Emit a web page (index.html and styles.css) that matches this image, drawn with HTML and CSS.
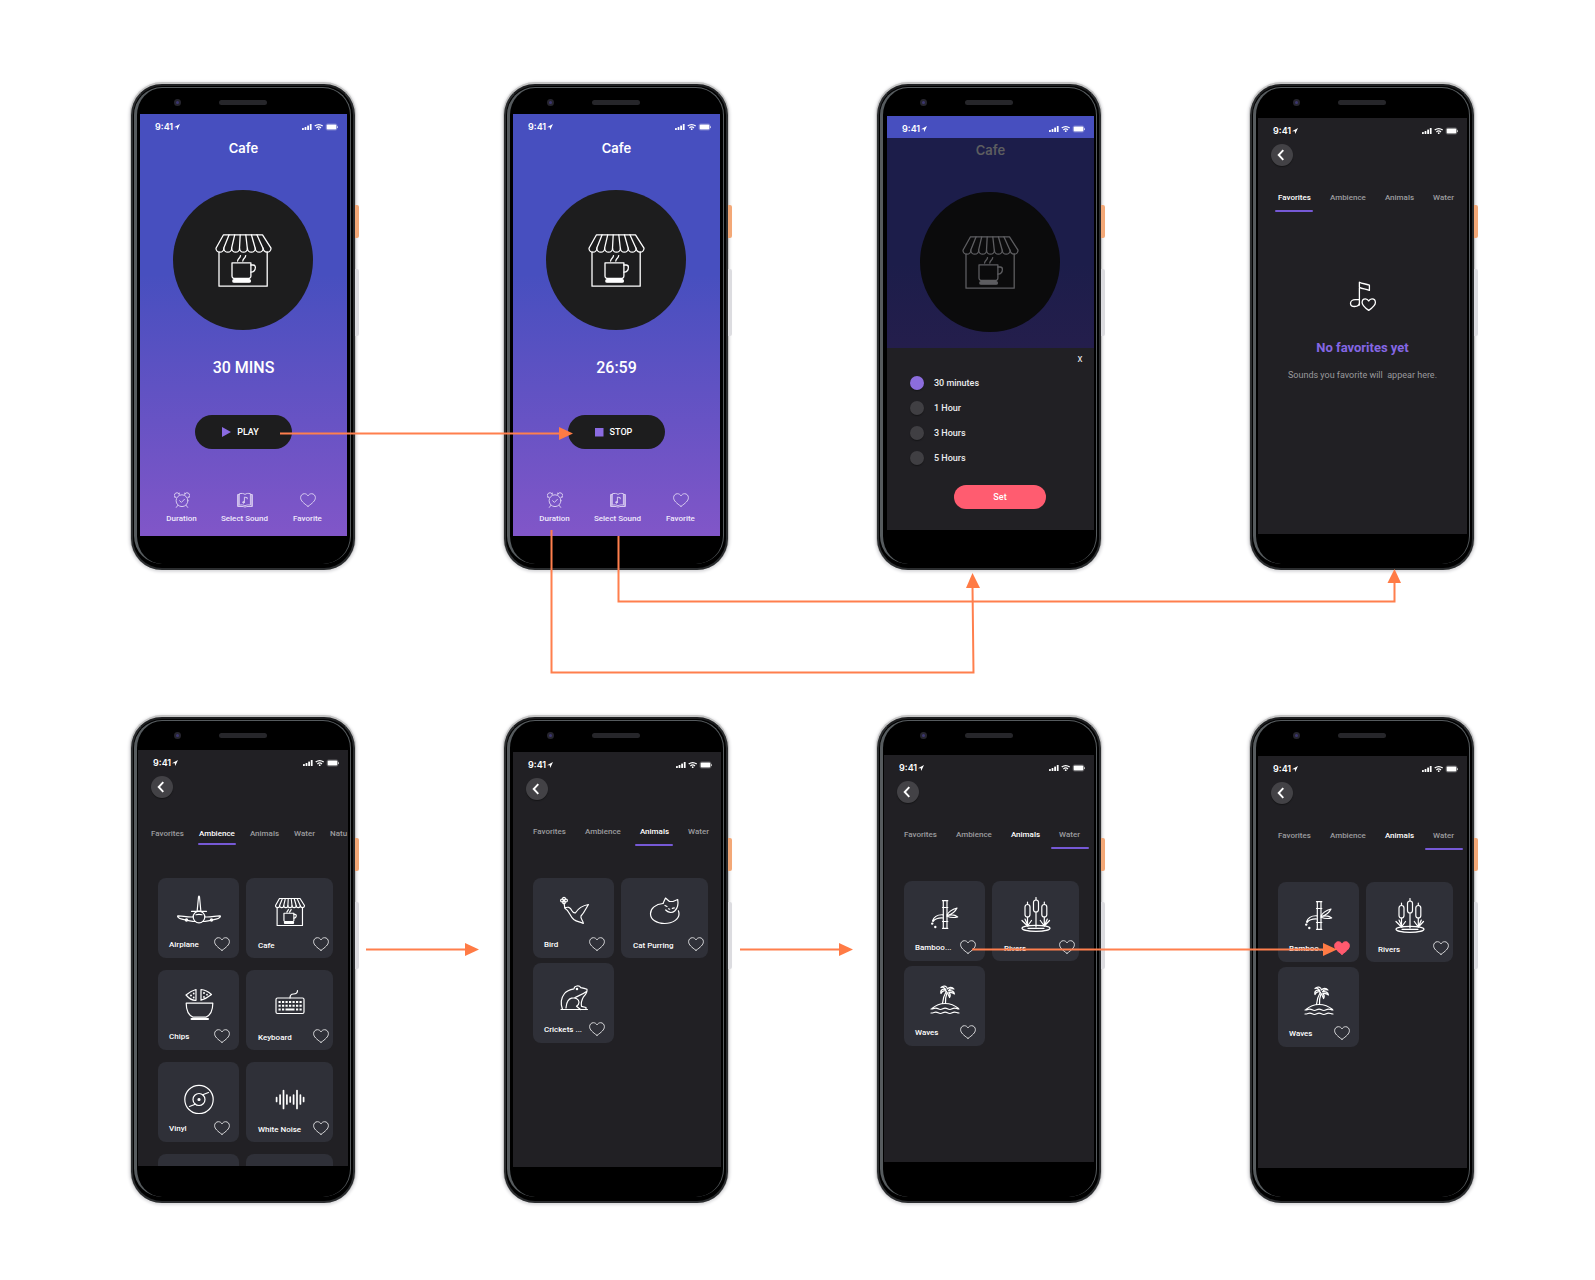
FILE: index.html
```html
<!DOCTYPE html>
<html lang="en">
<head>
<meta charset="utf-8">
<title>Sleep sounds – screen flow</title>
<meta name="viewport" content="width=device-width, initial-scale=1">
<link rel="stylesheet" href="styles.css">
</head>
<body>

<svg class="sprite" aria-hidden="true">
  <symbol id="i-locate" viewBox="0 0 6 6"><path d="M0 3.2 6 0 3.2 6 2.8 3.3Z" fill="currentColor"/></symbol>
  <symbol id="i-signals" viewBox="0 0 36 8">
    <g fill="currentColor">
      <rect x="0" y="5" width="1.8" height="2" rx=".5"/><rect x="2.6" y="4" width="1.8" height="3" rx=".5"/>
      <rect x="5.2" y="2.6" width="1.8" height="4.4" rx=".5"/><rect x="7.8" y="1" width="1.8" height="6" rx=".5"/>
      <rect x="24.6" y="1.4" width="9.8" height="5.200" rx="1"/><rect x="35.2" y="3.2" width=".8" height="1.8" rx=".4"/>
      <circle cx="16.7" cy="6.2" r=".9"/>
    </g>
    <rect x="24" y=".8" width="11" height="6.4" rx="1.6" fill="none" stroke="currentColor" stroke-width=".4" opacity=".5"/>
    <g fill="none" stroke="currentColor" stroke-width="1.3"><path d="M12.7 3.1Q16.7 0 20.700 3.1"/><path d="M14.4 4.9Q16.7 3 19 4.9"/></g>
  </symbol>
  <symbol id="i-back" viewBox="0 0 8 12"><path d="M6.3 1.2 1.7 6l4.6 4.8" fill="none" stroke="currentColor" stroke-width="1.9"/></symbol>
  <symbol id="i-heart" viewBox="0 0 16 14"><path d="M8 13.4C3.6 10.2 .6 7.7 .6 4.7 .6 2.4 2.3 .7 4.4 .7 5.9 .7 7.2 1.5 8 2.9 8.8 1.5 10.1 .7 11.6 .7 13.7 .7 15.4 2.4 15.4 4.7 15.4 7.7 12.4 10.2 8 13.4Z"/></symbol>
  <symbol id="i-cafe" viewBox="0 0 57 53">
    <path d="M8.5 .8H47.5L56 14.2a3.93 4 0 0 1-7.86 0a3.93 4 0 0 1-7.86 0a3.93 4 0 0 1-7.86 0a3.93 4 0 0 1-7.86 0a3.93 4 0 0 1-7.86 0a3.93 4 0 0 1-7.86 0a3.93 4 0 0 1-7.86 0Z"/>
    <path d="M14.1 .8 8.7 14.2M19.7 .8 16.6 14.2M25.2 .8 24.5 14.2M30.8 .8 32.3 14.2M36.4 .8 40.2 14.2M41.9 .8 48 14.2"/>
    <path d="M4 18V52.2H52.2V18"/>
    <path d="M17 28.8H35.9V42a2.5 2.5 0 0 1-2.5 2.5H19.5A2.5 2.5 0 0 1 17 42Z"/>
    <path d="M35.9 31h2.3a2.2 2.2 0 0 1 2.2 2.2c0 3-1.5 4.8-4.5 4.9"/>
    <path d="M22.6 27c.2-2.6 2.3-2.2 2.900-5.4M27.8 27c.2-2.6 2.3-2.2 2.900-5.4"/>
    <rect x="17.8" y="45.6" width="17.6" height="2.6" rx="1.3" fill="currentColor"/>
  </symbol>
  <symbol id="i-alarm" viewBox="0 0 16 16">
    <circle cx="8" cy="8.7" r="5.9"/><path d="M5.6 8.7l1.8 1.7 3-3.1M3.8 13.4 2.3 15.4M12.2 13.4l1.5 2M1 5.2A2.5 2.5 0 0 1 4.9 1.6M15 5.2a2.5 2.5 0 0 0-3.9-3.6M.6 5l1.4.3M15.4 5l-1.4.3M5.2 1v1.5M10.8 1v1.5"/>
  </symbol>
  <symbol id="i-songbook" viewBox="0 0 16 15">
    <path d="M2.6 1.2c2.2-.6 4-.3 5.4.7 1.4-1 3.2-1.3 5.4-.7v11.4c-2.2-.5-4-.2-5.4.8-1.4-1-3.2-1.3-5.4-.8ZM2.6 2H.6v12h5.6c.7.7 2.9.7 3.6 0h5.6V2h-2"/>
    <path d="M1.6 2.4v10.8M14.4 2.4v10.8" opacity=".8"/>
    <path d="M7.400 9.800V4.600l2.800.5v1.200"/><circle cx="6.6" cy="9.8" r=".9" fill="currentColor"/>
  </symbol>
  <symbol id="i-note" viewBox="0 0 28 32">
    <path d="M10.4 25V2.2c3 1.8 5.8 1.2 10 3v5.2c-4.2-1.8-7-1.2-10-3M10.4 19.6H6.2c-2.6 0-4.7 1.6-4.7 3.6 0 1.900 1.5 3.3 4 3.3 2.900 0 4.900-1.5 4.900-4"/>
    <path d="M19.7 30.4c-3.8-2.7-6.6-5-6.6-7.900 0-2.1 1.5-3.7 3.3-3.7 1.5 0 2.6.8 3.3 2.2.7-1.4 1.8-2.2 3.3-2.2 1.900 0 3.4 1.6 3.4 3.7 0 2.900-2.8 5.2-6.7 7.900Z"/>
  </symbol>
  <symbol id="i-plane" viewBox="0 0 44 36">
    <path d="M20.2 16.500 21.500 3Q22 1.200 22.500 3L23.800 16.500M14.500 17.300h15"/>
    <circle cx="22" cy="23" r="5.8"/><path d="M19 20.8q3-1 6 0M16.3 22.9C11 23.4 5 21.8 1 21.9c-1.2.3.3 2.4 4 3.3 4 1 10 2.4 13.3 2.3M27.7 22.9c5.3.5 11.3-1.1 15.3-1 1.2.3-.3 2.4-4 3.3-4 1-10 2.4-13.3 2.3"/>
    <g fill="currentColor"><circle cx="9.5" cy="26" r="1.1"/><circle cx="34.5" cy="26" r="1.1"/></g>
  </symbol>
  <symbol id="i-chips" viewBox="0 0 44 36">
    <path d="M9.2 17.2H35.8c0 6.5-2 11.800-7 14H16.2c-5-2.2-7-7.500-7-14Z"/><path d="M14.5 33H31" stroke-width="2"/>
    <path d="M19 3.5V14.3Q14 14.8 9 9Q13.5 5 19 3.5ZM24 3.5V14.300Q29.5 12.5 34.5 8.5Q29.5 4 24 3.5Z"/>
    <g fill="currentColor" stroke="none"><circle cx="14" cy="9.5" r="1"/><circle cx="16.7" cy="7.5" r=".9"/><circle cx="16.7" cy="11.5" r=".9"/><circle cx="27" cy="7" r="1"/><circle cx="27" cy="11" r=".9"/><circle cx="30" cy="8.7" r=".9"/></g>
  </symbol>
  <symbol id="i-keyboard" viewBox="0 0 44 36">
    <rect x="8" y="12" width="28" height="15.500" rx="1.5"/><path d="M22 12c0-3.500 1.5-4 3.500-4s4-.5 4-3.500"/>
    <g stroke-width="2" stroke-linecap="butt"><path d="M10.500 16H34M10.500 19.700H34" stroke-dasharray="2.200 1.300"/><path d="M10.500 23.500h2.200M14 23.500h2.200M17.500 23.500h9M28 23.500h2.200M31.500 23.500h2.200"/></g>
  </symbol>
  <symbol id="i-vinyl" viewBox="0 0 44 36">
    <circle cx="22" cy="21.5" r="14.2"/><circle cx="22" cy="21.5" r="6"/><circle cx="22" cy="21.5" r="1" fill="currentColor"/>
    <path d="M25.7 16.8 31.5 14.5M18.3 26.2 12.5 28.5"/>
  </symbol>
  <symbol id="i-noise" viewBox="0 0 44 36">
    <path d="M8.6 19.5v4M12.1 17v9M15.5 12.5v18M18.9 17v9M22.2 19v5M25.6 17v9M29 12.5v18M32.4 17v9M35.6 19.5v4" stroke-width="1.7"/>
  </symbol>
  <symbol id="i-bird" viewBox="0 0 44 36">
    <path d="M12 8.500l.8 5.700M12.8 14.2c2.5-1.7 5.5-1.2 7 2.3 1 2 2.2 2.6 3.7 2.3C27 13 31 11.5 36.5 10.5c-2.5 3.5-4 8-7.5 11.5-1 2.5 2.5 4.8 2.3 7.5-3.5-2-6-1.3-9.5-4C17.5 22 17.5 16.5 12.8 14.2Z"/>
    <g><circle cx="12" cy="4.7" r="1.4"/><circle cx="10" cy="6.6" r="1.4"/><circle cx="14" cy="6.6" r="1.4"/><circle cx="12" cy="8.4" r="1.3"/></g>
  </symbol>
  <symbol id="i-cat" viewBox="0 0 44 36">
    <path d="M20 9.5C12.5 10 7.5 14.5 7.5 19.7 7.5 25.5 13.5 29.5 21.5 29.5c8.500 0 14.500-4.500 14.500-9.500 0-1.200-.2-2.200-.6-3.200"/>
    <path d="M20 9.5 22.5 4 26.5 7.5H30L34.7 5.5c.7 4 .3 8.5-3 11.5-2.5 2.200-6.500 2-9-1"/>
    <path d="M22 11.500l2 1M29.300 14.300l2-.4M25.500 14.800l1.200.4"/>
  </symbol>
  <symbol id="i-frog" viewBox="0 0 44 36">
    <path d="M9 30.500H35.500M10.500 30.500C8.500 25 9 19 12.500 14.500c2-2.600 5-3.800 9.500-4.700.3-3 5-4 6.800-1.200 2.200.3 4.300.8 6.200 1.700.5 2.700-1.200 5-3.500 7.500-1.700 3-2.700 6-2 9.500l4.500 1.200v2M34.500 12.500C30.500 15.500 27 16.500 23 18.500M14 29c.5-3.500.5-8.500 5.500-9.800 4-.8 7.500.8 7.500 4 0 1.800-1 3-2.500 4l4 3.300"/>
    <circle cx="25" cy="10" r=".7" fill="currentColor"/>
  </symbol>
  <symbol id="i-bamboo" viewBox="0 0 44 36">
    <path d="M20.300 3.500v28M24 3.500v28M19.500 3.700h5.300M19.500 10.500h5.300M19.500 24.500h5.300M19.500 31.300h5.300"/>
    <path d="M9.500 24c1.500-4.500 5-6.500 10.500-6.200M10 24.500c2.500-3 5.500-3.800 10-3.500"/>
    <path d="M24 18C26 14 29 12.500 34 11c-1.800 3.700-5 6.200-9.500 7.500 4-1 7.500-.8 10.200 1.400-4 1.100-7.500.6-10.700-.7"/>
    <g fill="currentColor" stroke="none"><circle cx="9.200" cy="26.600" r="1.200"/><circle cx="12.300" cy="30" r="1.200"/></g>
  </symbol>
  <symbol id="i-reeds" viewBox="0 0 44 36">
    <rect x="19.500" y="3" width="5" height="12" rx="2.500"/><rect x="11" y="7.500" width="5" height="12.500" rx="2.500"/><rect x="27.800" y="7.500" width="5" height="12.500" rx="2.500"/>
    <path d="M22 .5V3M22 15v15M13.500 5v2.500M13.500 20v8M30.300 5v2.500M30.300 20v8M13.500 29 8 23.500M13.500 29 17.500 23.500M14 29l-3-7M30.300 29 35.500 23.500M30.300 29 26.300 23.500M30.300 29l3-7"/>
    <ellipse cx="22" cy="31.300" rx="14" ry="3"/><path d="M14 31.300h16"/>
  </symbol>
  <symbol id="i-palm" viewBox="0 0 44 36">
    <path d="M9 26.500c4-3.500 8-5 13-5s9.500 1.500 13.500 5M8 27c2.500 0 3.200-.9 4.700-.9 2.500 0 2.500 1.400 4.700 1.400s2.500-1.400 4.700-1.400 2.500 1.400 4.700 1.400 2.500-1.400 4.700-1.400c1.800 0 2.500.9 4.500.9M8 31c2.500 0 3.200-.9 4.700-.9 2.500 0 2.500 1.400 4.700 1.400s2.500-1.400 4.700-1.400 2.500 1.400 4.700 1.400 2.500-1.400 4.700-1.400c1.800 0 2.500.9 4.500.9"/>
    <path d="M19.500 21.500c.3-4 1-7.500 3.500-11.500M22.500 21.500c-.2-3.500.3-7.500 1.500-10.500"/>
    <path d="M23.500 9.500C22 8 19.500 8.500 18 11.500 17 8 20 6 23 8c-1-2.500-3.500-3.500-5-2.500 2.500-2.500 6-1.500 6.500 1.500 1.500-2 4.500-2.500 6.500 0-2.500-.8-4.500 0-5.500 1.800 3-.7 5.500.5 6 3.200-1.800-1.500-3.700-2-5.700-1.500 1.500 1.500 1.700 3.500.8 5-.8-2-1.700-4-3.100-6Z"/>
  </symbol>
</svg>

<main class="board">

  <section class="phone phone--player" aria-label="Player, ready">
    <div class="bezel"><i class="camera"></i><i class="speaker"></i></div>
    <div class="screen">
      <div class="status"><span>9:41</span><svg class="locate"><use href="#i-locate"/></svg><svg class="signals"><use href="#i-signals"/></svg></div>
      <h2 class="title">Cafe</h2>
      <div class="disc"><svg class="disc-art line"><use href="#i-cafe"/></svg></div>
      <p class="time">30 MINS</p>
      <button class="toggle" type="button"><svg class="toggle-icon" viewBox="0 0 9 10"><path d="M0 0 9 5 0 10Z"/></svg>PLAY</button>
      <nav class="actions">
        <a href="#duration"><svg class="line"><use href="#i-alarm"/></svg>Duration</a>
        <a href="#sounds"><svg class="line"><use href="#i-songbook"/></svg>Select Sound</a>
        <a href="#favorite"><svg class="line"><use href="#i-heart"/></svg>Favorite</a>
      </nav>
    </div>
    <i class="key key--power"></i><i class="key key--volume"></i>
  </section>

  <section class="phone phone--player" aria-label="Player, running">
    <div class="bezel"><i class="camera"></i><i class="speaker"></i></div>
    <div class="screen">
      <div class="status"><span>9:41</span><svg class="locate"><use href="#i-locate"/></svg><svg class="signals"><use href="#i-signals"/></svg></div>
      <h2 class="title">Cafe</h2>
      <div class="disc"><svg class="disc-art line"><use href="#i-cafe"/></svg></div>
      <p class="time">26:59</p>
      <button class="toggle" type="button"><svg class="toggle-icon" viewBox="0 0 9 10"><path d="M0 1H8.500V9.500H0Z"/></svg>STOP</button>
      <nav class="actions">
        <a href="#duration"><svg class="line"><use href="#i-alarm"/></svg>Duration</a>
        <a href="#sounds"><svg class="line"><use href="#i-songbook"/></svg>Select Sound</a>
        <a href="#favorite"><svg class="line"><use href="#i-heart"/></svg>Favorite</a>
      </nav>
    </div>
    <i class="key key--power"></i><i class="key key--volume"></i>
  </section>

  <section class="phone phone--duration" id="duration" aria-label="Duration">
    <div class="bezel"><i class="camera"></i><i class="speaker"></i></div>
    <div class="screen">
      <div class="status"><span>9:41</span><svg class="locate"><use href="#i-locate"/></svg><svg class="signals"><use href="#i-signals"/></svg></div>
      <div class="dimmed">
        <h2 class="title">Cafe</h2>
        <div class="disc"><svg class="disc-art line"><use href="#i-cafe"/></svg></div>
      </div>
      <form class="sheet">
        <button class="close" type="button" aria-label="Close">x</button>
        <label class="option"><input type="radio" name="duration" checked>30 minutes</label>
        <label class="option"><input type="radio" name="duration">1 Hour</label>
        <label class="option"><input type="radio" name="duration">3 Hours</label>
        <label class="option"><input type="radio" name="duration">5 Hours</label>
        <button class="set" type="button">Set</button>
      </form>
    </div>
    <i class="key key--power"></i><i class="key key--volume"></i>
  </section>

  <section class="phone phone--favorites" id="sounds" aria-label="Favorites">
    <div class="bezel"><i class="camera"></i><i class="speaker"></i></div>
    <div class="screen">
      <div class="status"><span>9:41</span><svg class="locate"><use href="#i-locate"/></svg><svg class="signals"><use href="#i-signals"/></svg></div>
      <button class="back" type="button" aria-label="Back"><svg><use href="#i-back"/></svg></button>
      <nav class="tabs"><a class="bright marked" href="#sounds">Favorites</a><a href="#ambience">Ambience</a><a href="#animals">Animals</a><a href="#water">Water</a></nav>
      <div class="empty">
        <svg class="line"><use href="#i-note"/></svg>
        <h2>No favorites yet</h2>
        <p>Sounds you favorite will  appear here.</p>
      </div>
    </div>
    <i class="key key--power"></i><i class="key key--volume"></i>
  </section>

  <section class="phone phone--ambience" id="ambience" aria-label="Ambience">
    <div class="bezel"><i class="camera"></i><i class="speaker"></i></div>
    <div class="screen">
      <div class="status"><span>9:41</span><svg class="locate"><use href="#i-locate"/></svg><svg class="signals"><use href="#i-signals"/></svg></div>
      <button class="back" type="button" aria-label="Back"><svg><use href="#i-back"/></svg></button>
      <nav class="tabs"><a href="#sounds">Favorites</a><a class="bright marked" href="#ambience">Ambience</a><a href="#animals">Animals</a><a href="#water">Water</a><a href="#nature">Natu</a></nav>
      <div class="cards">
        <article class="card"><svg class="art line"><use href="#i-plane"/></svg><footer><h3>Airplane</h3><button class="heart" type="button" aria-label="Favorite"><svg class="line"><use href="#i-heart"/></svg></button></footer></article>
        <article class="card"><svg class="art art--cafe line"><use href="#i-cafe"/></svg><footer><h3>Cafe</h3><button class="heart" type="button" aria-label="Favorite"><svg class="line"><use href="#i-heart"/></svg></button></footer></article>
        <article class="card"><svg class="art line"><use href="#i-chips"/></svg><footer><h3>Chips</h3><button class="heart" type="button" aria-label="Favorite"><svg class="line"><use href="#i-heart"/></svg></button></footer></article>
        <article class="card"><svg class="art line"><use href="#i-keyboard"/></svg><footer><h3>Keyboard</h3><button class="heart" type="button" aria-label="Favorite"><svg class="line"><use href="#i-heart"/></svg></button></footer></article>
        <article class="card"><svg class="art line"><use href="#i-vinyl"/></svg><footer><h3>Vinyl</h3><button class="heart" type="button" aria-label="Favorite"><svg class="line"><use href="#i-heart"/></svg></button></footer></article>
        <article class="card"><svg class="art line"><use href="#i-noise"/></svg><footer><h3>White Noise</h3><button class="heart" type="button" aria-label="Favorite"><svg class="line"><use href="#i-heart"/></svg></button></footer></article>
        <article class="card"></article>
        <article class="card"></article>
      </div>
    </div>
    <i class="key key--power"></i><i class="key key--volume"></i>
  </section>

  <section class="phone phone--animals" id="animals" aria-label="Animals">
    <div class="bezel"><i class="camera"></i><i class="speaker"></i></div>
    <div class="screen">
      <div class="status"><span>9:41</span><svg class="locate"><use href="#i-locate"/></svg><svg class="signals"><use href="#i-signals"/></svg></div>
      <button class="back" type="button" aria-label="Back"><svg><use href="#i-back"/></svg></button>
      <nav class="tabs"><a href="#sounds">Favorites</a><a href="#ambience">Ambience</a><a class="bright marked" href="#animals">Animals</a><a href="#water">Water</a></nav>
      <div class="cards">
        <article class="card"><svg class="art line"><use href="#i-bird"/></svg><footer><h3>Bird</h3><button class="heart" type="button" aria-label="Favorite"><svg class="line"><use href="#i-heart"/></svg></button></footer></article>
        <article class="card"><svg class="art line"><use href="#i-cat"/></svg><footer><h3>Cat Purring</h3><button class="heart" type="button" aria-label="Favorite"><svg class="line"><use href="#i-heart"/></svg></button></footer></article>
        <article class="card"><svg class="art line"><use href="#i-frog"/></svg><footer><h3>Crickets ...</h3><button class="heart" type="button" aria-label="Favorite"><svg class="line"><use href="#i-heart"/></svg></button></footer></article>
      </div>
    </div>
    <i class="key key--power"></i><i class="key key--volume"></i>
  </section>

  <section class="phone phone--water" id="water" aria-label="Water">
    <div class="bezel"><i class="camera"></i><i class="speaker"></i></div>
    <div class="screen">
      <div class="status"><span>9:41</span><svg class="locate"><use href="#i-locate"/></svg><svg class="signals"><use href="#i-signals"/></svg></div>
      <button class="back" type="button" aria-label="Back"><svg><use href="#i-back"/></svg></button>
      <nav class="tabs"><a href="#sounds">Favorites</a><a href="#ambience">Ambience</a><a class="bright" href="#animals">Animals</a><a class="marked" href="#water">Water</a></nav>
      <div class="cards">
        <article class="card"><svg class="art line"><use href="#i-bamboo"/></svg><footer><h3>Bamboo...</h3><button class="heart" type="button" aria-label="Favorite"><svg class="line"><use href="#i-heart"/></svg></button></footer></article>
        <article class="card"><svg class="art line"><use href="#i-reeds"/></svg><footer><h3>Rivers</h3><button class="heart" type="button" aria-label="Favorite"><svg class="line"><use href="#i-heart"/></svg></button></footer></article>
        <article class="card"><svg class="art line"><use href="#i-palm"/></svg><footer><h3>Waves</h3><button class="heart" type="button" aria-label="Favorite"><svg class="line"><use href="#i-heart"/></svg></button></footer></article>
      </div>
    </div>
    <i class="key key--power"></i><i class="key key--volume"></i>
  </section>

  <section class="phone phone--liked" aria-label="Water, one favorite">
    <div class="bezel"><i class="camera"></i><i class="speaker"></i></div>
    <div class="screen">
      <div class="status"><span>9:41</span><svg class="locate"><use href="#i-locate"/></svg><svg class="signals"><use href="#i-signals"/></svg></div>
      <button class="back" type="button" aria-label="Back"><svg><use href="#i-back"/></svg></button>
      <nav class="tabs"><a href="#sounds">Favorites</a><a href="#ambience">Ambience</a><a class="bright" href="#animals">Animals</a><a class="marked" href="#water">Water</a></nav>
      <div class="cards">
        <article class="card"><svg class="art line"><use href="#i-bamboo"/></svg><footer><h3>Bamboo...</h3><button class="heart heart--on" type="button" aria-label="Favorite"><svg class="line"><use href="#i-heart"/></svg></button></footer></article>
        <article class="card"><svg class="art line"><use href="#i-reeds"/></svg><footer><h3>Rivers</h3><button class="heart" type="button" aria-label="Favorite"><svg class="line"><use href="#i-heart"/></svg></button></footer></article>
        <article class="card"><svg class="art line"><use href="#i-palm"/></svg><footer><h3>Waves</h3><button class="heart" type="button" aria-label="Favorite"><svg class="line"><use href="#i-heart"/></svg></button></footer></article>
      </div>
    </div>
    <i class="key key--power"></i><i class="key key--volume"></i>
  </section>

  <!-- Arrows between the screens -->
  <svg class="flow" viewBox="0 0 1595 1280" preserveAspectRatio="xMidYMin meet" aria-hidden="true">
    <g class="flow-line">
      <path d="M280 433.500H562"/>
      <path d="M551.500 530V672.500H973.500L972.500 586"/>
      <path d="M618.500 536V601.500H1394.500V580"/>
      <path d="M366 949.500H467M740 949.500H841M972 949.500H1326"/>
    </g>
    <g class="flow-head">
      <path d="M559 427 573 433.500 559 440Z"/>
      <path d="M966 588 972.500 573 980 588Z"/>
      <path d="M1387.500 583 1394.500 569 1401 583Z"/>
      <path d="M465 943 479 949.500 465 956Z"/><path d="M839 943 853 949.500 839 956Z"/><path d="M1323 943 1337 949.500 1323 956Z"/>
    </g>
  </svg>
</main>
</body>
</html>
```
FILE: styles.css
```css
* { box-sizing: border-box; }

body {
  margin: 0;
  background: #fff;
  color: #fff;
  font-family: Roboto, "Liberation Sans", sans-serif;
  font-size: 8px;
  font-weight: 500;
}

h2, h3, p { margin: 0; font-weight: 500; }
a { color: inherit; text-decoration: none; }
button { border: 0; padding: 0; margin: 0; background: none; color: inherit; font: inherit; cursor: pointer; }
i { display: block; }
.sprite { display: none; }
.line { fill: none; stroke: currentColor; stroke-linecap: round; stroke-linejoin: round; }

/* Board */
.board {
  position: relative;
  display: grid;
  grid-template-columns: repeat(4, 224px);
  justify-content: space-between;
  row-gap: 147px;
  padding: 84px 121px 77px 131px;
}

.flow { position: absolute; top: 0; left: 0; width: 100%; pointer-events: none; }
.flow-line { fill: none; stroke: #ff7f4d; stroke-width: 2; }
.flow-head { fill: #ff7b45; }

/* Phone */
.phone {
  --bezel: 30px;
  --height: 422px;
  --left: 9px;
  --width: 207px;
  position: relative;
  height: 486px;
  border: 2px solid #2b2d2f;
  border-top-color: #1d1e20;
  border-radius: 31px;
  background: #000;
  box-shadow: 0 -1px 0 1px #c4c4c4, 0 0 3px 2px #d9d9dc;
}
.phone::before {
  content: "";
  position: absolute;
  inset: 1px 2px 4px 1px;
  border: solid #565b5e;
  border-width: 1px 1px 0 3px;
  border-radius: 28px;
}
.phone--duration { --bezel: 32px; --height: 414px; --left: 10px; }
.phone--favorites { --bezel: 34px; --height: 416px; --left: 8px; --width: 209px; }
.phone--ambience { --bezel: 33px; --height: 416px; --left: 7px; --width: 210px; }
.phone--animals { --bezel: 35px; --height: 415px; --width: 208px; }
.phone--water { --bezel: 38px; --height: 407px; --left: 7px; --width: 210px; }
.phone--liked { --bezel: 39px; --height: 412px; --left: 8px; --width: 209px; }

.bezel {
  display: flex;
  align-items: flex-start;
  height: calc(var(--bezel) - 2px);
  padding: 13px 0 0 41px;
}
.camera { width: 7px; height: 7px; border: 2px solid #26252e; border-radius: 50%; background: #3b3670; }
.speaker { width: 48px; height: 5px; margin: 1px 0 0 38px; border-radius: 3px; background: #26262a; }

.key { position: absolute; left: 222px; width: 4px; border-radius: 0 2px 2px 0; }
.key--power { top: 119px; height: 33px; background: #f3a877; }
.key--volume { top: 183px; height: 67px; background: #dcdce0; }

/* Screen */
.screen {
  position: relative;
  width: var(--width);
  height: var(--height);
  margin-left: calc(var(--left) - 2px);
  overflow: hidden;
  background: #212024;
}
.phone--player .screen { background: linear-gradient(#474fbf 0%, #474fbf 38%, #8156c8 100%); }

.status {
  display: flex;
  align-items: center;
  height: 22px;
  padding: 3px 9px 0 15px;
  font-family: Inter, "Liberation Sans", sans-serif;
  font-size: 9px;
  font-weight: 600;
}
.locate { width: 6px; height: 6px; margin-left: 1px; }
.signals { width: 36px; height: 8px; margin-left: auto; }
.phone--duration .status { background: #474fbf; }

/* Player */
.title {
  margin-top: 4px;
  font-family: Inter, "Liberation Sans", sans-serif;
  font-size: 13px;
  font-weight: 600;
  line-height: 17px;
  text-align: center;
}
.disc {
  display: flex;
  align-items: center;
  justify-content: center;
  width: 140px;
  height: 140px;
  margin: 33px 0 0 33px;
  border-radius: 50%;
  background: #1d1d1e;
}
.disc-art { width: 57px; height: 53px; stroke-width: 1.300; }
.time { margin-top: 28px; font-size: 16px; line-height: 20px; text-align: center; }
.toggle {
  display: flex;
  align-items: center;
  justify-content: center;
  gap: 6px;
  width: 97px;
  height: 34px;
  margin: 37px auto 0;
  padding-right: 6px;
  border-radius: 17px;
  background: #1d1d1e;
  font-size: 9px;
}
.toggle-icon { width: 9px; height: 10px; fill: #8b6be2; }
.actions {
  display: grid;
  grid-template-columns: repeat(3, 63px);
  margin: 43px 0 0 10px;
  color: #f0e9fb;
}
.actions a { display: flex; flex-direction: column; align-items: center; gap: 6px; line-height: 10px; white-space: nowrap; }
.actions svg { width: 16px; height: 16px; opacity: .8; }

/* Duration sheet */
.dimmed { height: 210px; padding-top: 1px; background: linear-gradient(#1c1d4a 60%, #241e4c); color: #5d5d60; }
.dimmed .title { margin-top: 3px; }
.dimmed .disc { background: #0b0b0c; }
.sheet { display: flex; flex-direction: column; align-items: flex-start; padding: 5px 9px 0 23px; font-size: 9px; color: #ececee; }
.close { align-self: flex-end; width: 10px; line-height: 12px; font-size: 10px; font-weight: 400; margin-bottom: 5px; }
.option { display: flex; align-items: center; gap: 10px; height: 25px; }
.option input {
  appearance: none;
  width: 14px;
  height: 14px;
  margin: 0;
  border-radius: 50%;
  background: #403f43;
  box-shadow: 0 1px 1px #161618;
}
.option input:checked { background: #8c6ddd; }
.set { width: 92px; height: 24px; margin: 15px 0 0 44px; border-radius: 12px; background: #ff5c70; color: #fff; }

/* Sound browser */
.back {
  display: flex;
  align-items: center;
  justify-content: center;
  width: 22px;
  height: 22px;
  margin: 4px 0 0 13px;
  border-radius: 50%;
  background: #434246;
  box-shadow: 0 1px 1px #151517;
}
.back svg { width: 8px; height: 12px; margin-right: 2px; }
.tabs { display: flex; gap: 19px; margin-top: 26px; padding-left: 20px; line-height: 12px; color: #9c9c9f; }
.tabs a { position: relative; white-space: nowrap; }
.tabs .bright { color: #fff; }
.marked::after {
  content: "";
  position: absolute;
  top: 18px;
  left: 50%;
  width: 38px;
  height: 2px;
  margin-left: -19px;
  border-radius: 1px;
  background: #7659d6;
}
.phone--ambience .tabs { gap: 15px; margin-top: 30px; padding-left: 13px; }
.phone--ambience .marked::after { top: 15px; }

.empty { display: flex; flex-direction: column; align-items: center; padding-top: 76px; }
.empty svg { width: 28px; height: 32px; stroke-width: 1.300; }
.empty h2 { margin-top: 28px; font-size: 13px; font-weight: 700; line-height: 16px; color: #8567e4; }
.empty p { margin-top: 12px; font-size: 9px; font-weight: 400; line-height: 14px; color: #9a9a9d; white-space: pre; }

.cards {
  display: grid;
  grid-template-columns: 81px 87px;
  grid-auto-rows: 80px;
  gap: 5px 7px;
  margin: 40px 0 0 20px;
}
.phone--ambience .cards { row-gap: 12px; margin-top: 38px; }
.card {
  display: flex;
  flex-direction: column;
  align-items: center;
  padding: 16px 0 6px;
  border-radius: 8px;
  background: #2f3038;
}
.art { width: 44px; height: 36px; overflow: visible; stroke-width: 1.200; }
.art--cafe { width: 30px; height: 28px; margin: 4px 0; stroke-width: 2.200; }
.card footer {
  display: flex;
  align-items: center;
  justify-content: space-between;
  width: 100%;
  height: 16px;
  margin-top: 6px;
  padding: 0 9px 0 11px;
}
.card h3 { padding-top: 2px; font-size: 8px; line-height: 12px; white-space: nowrap; }
.card:nth-child(even) footer { padding: 0 4px 0 12px; }
.card:nth-child(even) h3 { padding-top: 4px; }
.heart { width: 16px; height: 14px; color: #d8d8da; }
.heart svg { display: block; width: 16px; height: 14px; }
.heart--on { color: #ff5a6e; }
.heart--on svg { fill: currentColor; }
```
